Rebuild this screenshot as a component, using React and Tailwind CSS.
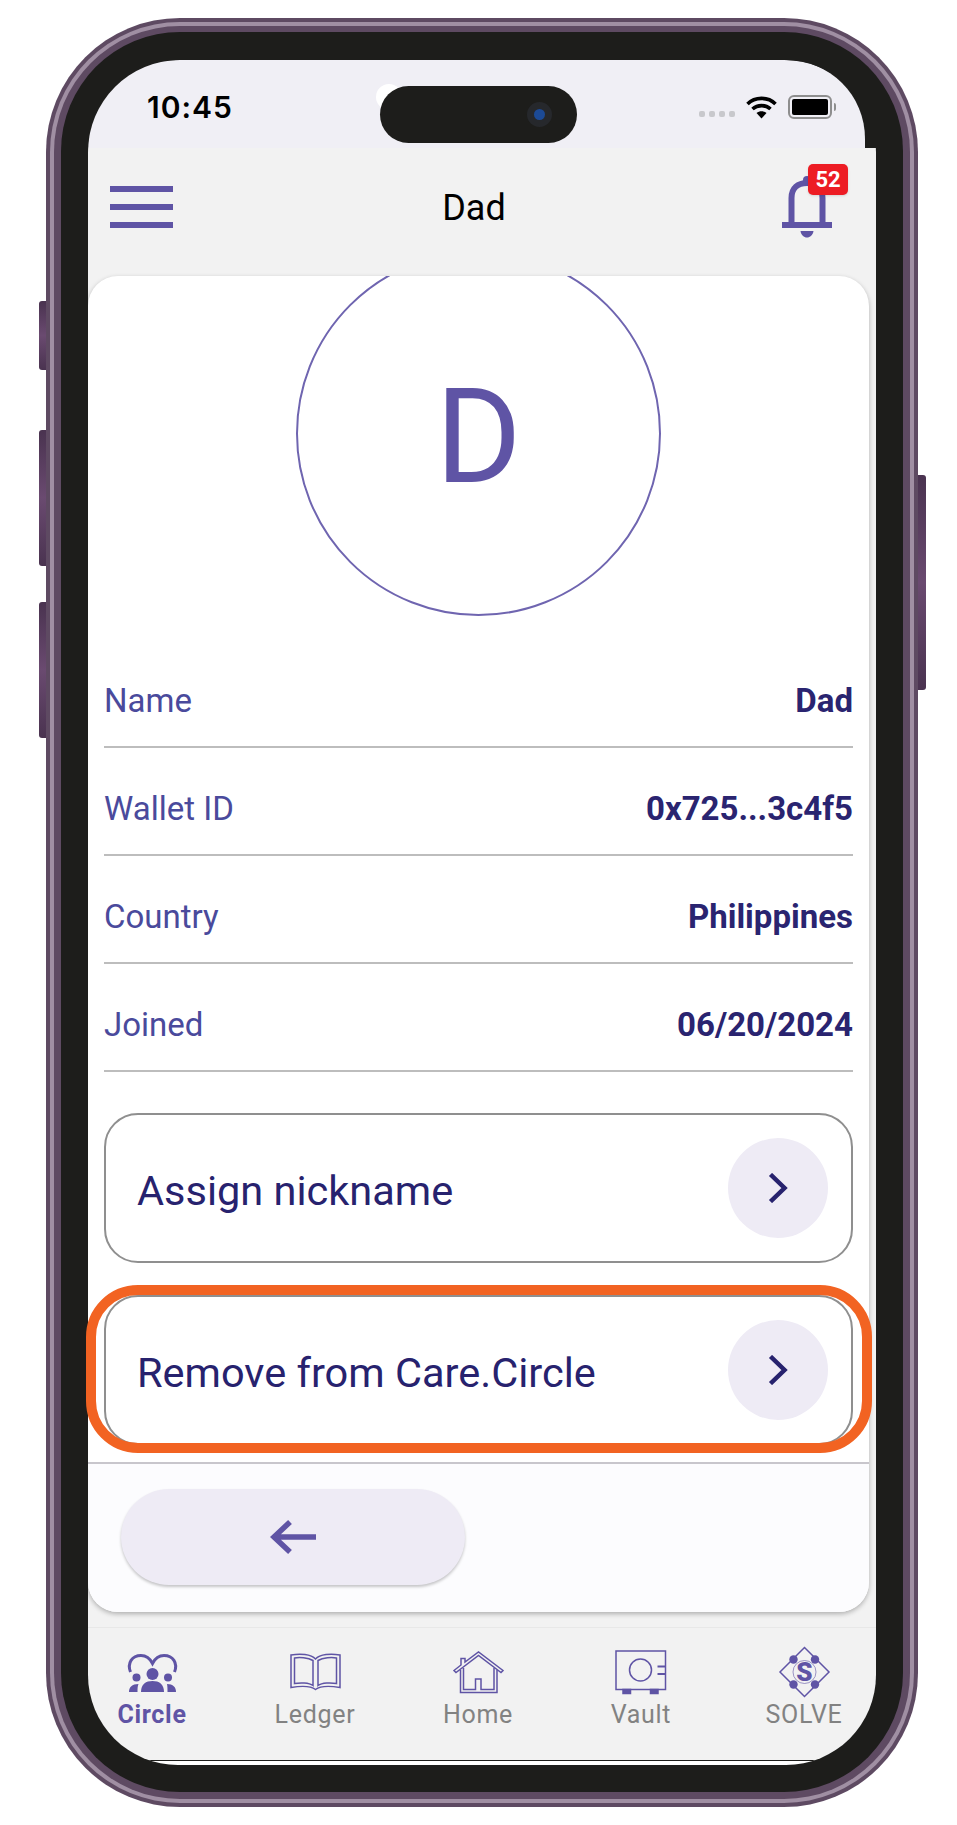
const rows = [
  { label: "Name", value: "Dad" },
  { label: "Wallet ID", value: "0x725...3c4f5" },
  { label: "Country", value: "Philippines" },
  { label: "Joined", value: "06/20/2024" },
];

function CircleIcon() {
  return (
    <svg width="60" height="52" viewBox="0 0 60 52" fill="#5f54a5">
      <path d="M8.5 26C5 17 10 9.5 19 9.5C24 9.5 28 12.5 30.5 17.5C33 12.5 37 9.5 42 9.5C51 9.5 56 17 52.5 26" fill="none" stroke="#5f54a5" strokeWidth="3" />
      <circle cx="30.5" cy="28" r="6" />
      <path d="M19 46C19 38 24 35 30.5 35C37 35 42 38 42 46Z" />
      <circle cx="14.5" cy="31.5" r="4" />
      <circle cx="46" cy="31.5" r="4" />
      <path d="M7 46C7 41 10 38 16.5 38C15.5 40 15.5 43 15.5 46Z" />
      <path d="M54 46C54 41 51 38 45 38C45.5 40 45.5 43 45.5 46Z" />
    </svg>
  );
}

function LedgerIcon() {
  return (
    <svg width="60" height="52" viewBox="0 0 60 52" fill="none" stroke="#5f54a5" strokeWidth="1.5">
      <path d="M30.5 13C26 8 15 7.5 6 9V41.5C15 40 26 40 30.5 43.5C35 40 46 40 55 41.5V9C46 7.5 35 8 30.5 13Z" />
      <path d="M28 14.5C23 11.5 14 11 9.5 12V37.5C15 36.5 24 36.5 28 39.5Z" />
      <path d="M33 14.5C38 11.5 47 11 51.5 12V37.5C46 36.5 37 36.5 33 39.5Z" />
    </svg>
  );
}

function HomeIcon() {
  return (
    <svg width="60" height="52" viewBox="0 0 60 52" fill="none" stroke="#5f54a5" strokeWidth="1.5">
      <path d="M6 24.5L13 19V12.5H17V16L30.5 6L55 24.5L53 26.5L30.5 9.5L8 26.5Z" />
      <path d="M12.5 24V46.5H49V24" />
      <path d="M15.5 22V43.5H27.5V33H33V43.5H46V22" />
    </svg>
  );
}

function VaultIcon() {
  return (
    <svg width="60" height="52" viewBox="0 0 60 52" fill="none" stroke="#5f54a5" strokeWidth="1.5">
      <rect x="5" y="5" width="49.5" height="38.5" />
      <circle cx="29.5" cy="24" r="11" />
      <path d="M46.5 20.5H54.5M46.5 28H54.5" strokeWidth="2" />
      <path d="M12 43.5H19.5V47.5H12ZM39.5 43.5H47V47.5H39.5Z" fill="#5f54a5" />
    </svg>
  );
}

function SolveIcon() {
  return (
    <svg width="60" height="52" viewBox="0 0 60 52" fill="none" stroke="#5f54a5" strokeWidth="1.5">
      <path d="M30.5 1.5L55 26L30.5 50.5L6 26Z" />
      <circle cx="30.5" cy="26" r="11.5" strokeWidth="0.6" />
      <g fill="#5f54a5" stroke="none">
        <circle cx="19.5" cy="13.5" r="4.2" />
        <circle cx="41" cy="13.5" r="4.2" />
        <circle cx="19.5" cy="38.5" r="4.2" />
        <circle cx="41" cy="38.5" r="4.2" />
        <text x="30.5" y="34.5" textAnchor="middle" fontSize="26" fontWeight="900" fontFamily="Roboto, sans-serif">S</text>
      </g>
    </svg>
  );
}

const tabs = [
  { label: "Circle", icon: <CircleIcon />, active: true },
  { label: "Ledger", icon: <LedgerIcon /> },
  { label: "Home", icon: <HomeIcon /> },
  { label: "Vault", icon: <VaultIcon /> },
  { label: "SOLVE", icon: <SolveIcon /> },
];

function StatusBar() {
  return (
    <div className="flex h-[88px] w-[777px] items-start rounded-tl-[92px] rounded-tr-[82px] bg-[#f0eff5] pl-[59px]">
      <span className="mt-[27px] w-[233px] font-['Inter',sans-serif] text-[30px] leading-[40px] font-semibold tracking-[1px] text-black">10:45</span>
      <div className="relative mt-[26px] h-[57px] w-[197px]">
        <div className="absolute -top-[2px] -left-[4px] h-[26px] w-[26px] rounded-full bg-white"></div>
        <div className="relative flex h-[57px] items-center justify-end rounded-full bg-[#1d1d1b] pr-[25px]">
          <div className="flex h-[25px] w-[25px] items-center justify-center rounded-full bg-[#26282c]">
            <div className="h-[11px] w-[11px] rounded-full bg-[#1c4a96]"></div>
          </div>
        </div>
      </div>
      <div className="mt-[51px] ml-[122px] flex gap-[4px]">
        <div className="h-[6px] w-[6px] rounded-[2px] bg-[#c8c8cc]"></div>
        <div className="h-[6px] w-[6px] rounded-[2px] bg-[#c8c8cc]"></div>
        <div className="h-[6px] w-[6px] rounded-[2px] bg-[#c8c8cc]"></div>
        <div className="h-[6px] w-[6px] rounded-[2px] bg-[#c8c8cc]"></div>
      </div>
      <svg className="mt-[35px] ml-[11px]" width="31" height="24" viewBox="0 0 31 24" fill="none" stroke="#000" strokeWidth="3.6">
        <path d="M1.5 9C9 1.5 22 1.5 29.5 9" />
        <path d="M6.5 14C11.5 9.5 19.5 9.5 24.5 14" />
        <path d="M10.5 18L15.5 23.5L20.5 18C17.5 15.5 13.5 15.5 10.5 18Z" fill="#000" stroke="none" />
      </svg>
      <div className="mt-[35px] ml-[11px] flex items-center">
        <div className="h-[24px] w-[44px] rounded-[6px] border-2 border-[#8e8e8e] p-[2px]">
          <div className="h-full w-full rounded-[2px] bg-black"></div>
        </div>
        <div className="ml-[2px] h-[8px] w-[2px] rounded-r-full bg-[#8e8e8e]"></div>
      </div>
    </div>
  );
}

function Header() {
  return (
    <div className="flex h-[128px] items-center pr-[44px] pl-[22px]">
      <div className="flex w-[63px] flex-col gap-[12px] pb-[10px]">
        <div className="h-[6px] bg-[#5f54a5]"></div>
        <div className="h-[6px] bg-[#5f54a5]"></div>
        <div className="h-[6px] bg-[#5f54a5]"></div>
      </div>
      <div className="flex-1 pr-[7px] pb-[8px] text-center text-[36px] leading-[44px] text-black">Dad</div>
      <div className="relative -mt-[12px] h-[64px] w-[50px]">
        <svg width="50" height="64" viewBox="0 0 50 64" fill="none" stroke="#5f54a5">
          <path d="M9.5 51V24C9.5 14 16 9 25 9C34 9 40.5 14 40.5 24V51" strokeWidth="6" />
          <circle cx="25" cy="6" r="4" fill="#5f54a5" stroke="none" />
          <path d="M0 48H50V54H0ZM18.5 57H31.5C31 61 28 63.5 25 63.5C22 63.5 19 61 18.5 57Z" fill="#5f54a5" stroke="none" />
        </svg>
        <div className="absolute -top-[10px] -right-[16px] flex h-[31px] w-[40px] items-center justify-center rounded-[5px] bg-[#ed1c24] text-[22px] leading-none font-bold text-white shadow-sm">52</div>
      </div>
    </div>
  );
}

function ActionButton({ label, className }) {
  return (
    <div className={`flex h-[150px] items-center justify-between rounded-[34px] border-2 border-[#8f8f8f] pr-[23px] pl-[31px] ${className}`}>
      <span className="pt-[5px] text-[41.5px] leading-[48px] text-[#27226e]">{label}</span>
      <div className="flex h-[100px] w-[100px] items-center justify-center rounded-full bg-[#eeebf5]">
        <svg width="20" height="30" viewBox="0 0 20 30" fill="none" stroke="#27226e" strokeWidth="4.5">
          <path d="M2.5 1.5L16.5 15L2.5 28.5" />
        </svg>
      </div>
    </div>
  );
}

function Card() {
  return (
    <div className="mr-[7px] h-[1336px] overflow-hidden rounded-[30px] bg-white shadow-[0_2px_5px_rgba(0,0,0,0.28)]">
      <div className="mx-auto -mt-[25px] h-[365px] w-[365px] rounded-full border-2 border-[#6f65b0] text-center text-[131px] leading-[368px] text-[#5f54a5]">D</div>
      <div className="px-[16px] pt-[24px]">
        {rows.map((row) => (
          <div key={row.label} className="flex h-[108px] items-center justify-between border-b-2 border-[#bdbdbd] pt-[16px] text-[33px] leading-[40px]">
            <span className="text-[#4a4a9c]">{row.label}</span>
            <span className="font-bold text-[#2a2470]">{row.value}</span>
          </div>
        ))}
        <ActionButton label="Assign nickname" className="mt-[41px]" />
        <ActionButton label="Remove from Care.Circle" className="mt-[32px]" />
      </div>
      <div className="mt-[17px] h-[150px] border-t-2 border-[#c8c6cc] bg-[#fcfcfe] pt-[25px] pl-[33px]">
        <div className="flex h-[96px] w-[344px] items-center justify-center rounded-full bg-[#eeebf5] shadow-[0_2px_3px_rgba(0,0,0,0.22)]">
          <svg width="46" height="34" viewBox="0 0 46 34" fill="none" stroke="#5f54a5" strokeWidth="5.5">
            <path d="M46 17H4M20 2L4 17L20 32" />
          </svg>
        </div>
      </div>
    </div>
  );
}

function BottomNav() {
  return (
    <div className="mt-[15px] flex h-[134px] justify-between border-t border-[#e8e8e8] border-b-[1.5px] border-b-[#1d1d1b] pt-[18px] pr-[12px] pl-[4px]">
      {tabs.map((tab) => (
        <div key={tab.label} className="flex w-[120px] flex-col items-center">
          {tab.icon}
          <span className={`mt-[3px] text-[25px] leading-[28px] tracking-[0.7px] ${tab.active ? "font-bold text-[#5f54a5]" : "text-[#828282]"}`}>{tab.label}</span>
        </div>
      ))}
    </div>
  );
}

export default function App() {
  return (
    <div className="h-[1825px] w-[957px] overflow-hidden bg-white pt-[18px] pl-[46px] font-['Roboto',sans-serif]">
      <div className="relative h-[1789px] w-[872px]">
        <div className="absolute top-[283px] -left-[7px] h-[69px] w-[8px] rounded-l-[3px] bg-linear-to-b from-[#4a3350] via-[#6a4a70] to-[#4a3350]"></div>
        <div className="absolute top-[412px] -left-[7px] h-[136px] w-[8px] rounded-l-[3px] bg-linear-to-b from-[#4a3350] via-[#6a4a70] to-[#4a3350]"></div>
        <div className="absolute top-[584px] -left-[7px] h-[136px] w-[8px] rounded-l-[3px] bg-linear-to-b from-[#4a3350] via-[#6a4a70] to-[#4a3350]"></div>
        <div className="absolute top-[457px] -right-[8px] h-[215px] w-[9px] rounded-r-[3px] bg-linear-to-b from-[#4a3350] via-[#6a4a70] to-[#4a3350]"></div>

        <div className="relative h-full w-full rounded-[134px] bg-[#5e4a62] p-[4px]">
          <div className="h-full rounded-[130px] bg-[#a08fa3] p-[4px]">
            <div className="h-full rounded-[126px] bg-[#5e4a62] px-[7px] pt-[6px] pb-[7px]">
              <div className="h-full rounded-[119px] bg-[#1d1d1b] px-[27px] pt-[28px] pb-[27px]">
                <div className="h-[1705px] overflow-hidden rounded-t-[92px] rounded-b-[90px]">
                  <StatusBar />
                  <div className="bg-[#f2f2f2]">
                    <Header />
                    <Card />
                    <BottomNav />
                  </div>
                  <div className="h-[4px] bg-white"></div>
                </div>
              </div>
            </div>
          </div>
        </div>

        <div className="absolute top-[1267px] left-[40px] h-[168px] w-[786px] rounded-[52px] border-[10px] border-[#f26322]"></div>
      </div>
    </div>
  );
}
